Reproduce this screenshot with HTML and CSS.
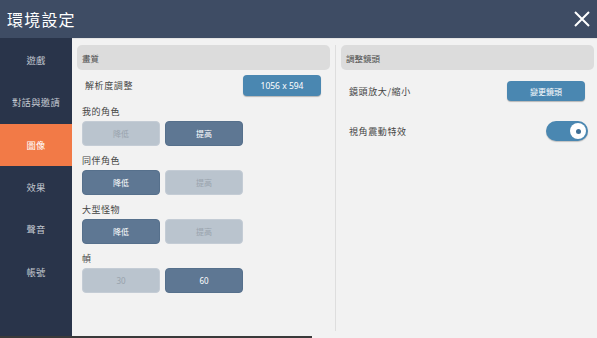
FILE: index.html
```html
<!DOCTYPE html>
<html>
<head>
<meta charset="utf-8">
<link rel="stylesheet" href="styles.css">
</head>
<body>
<div class="page">
  <header class="topbar">
    <div class="title">環境設定</div>
    <svg class="close" width="16" height="16" viewBox="0 0 16 16"><path d="M1 1 L15 15 M15 1 L1 15" stroke="#fff" stroke-width="2" fill="none"/></svg>
  </header>
  <div class="main">
    <nav class="sidebar">
      <div class="tab">遊戲</div>
      <div class="tab">對話與邀請</div>
      <div class="tab active">圖像</div>
      <div class="tab">效果</div>
      <div class="tab">聲音</div>
      <div class="tab">帳號</div>
    </nav>
    <section class="content">
      <div class="col">
        <div class="sec-head">畫質</div>
        <div class="row res-row">
          <span class="row-label">解析度調整</span>
          <span class="btn blue res-btn">1056 x 594</span>
        </div>
        <div class="group first">
          <div class="g-label">我的角色</div>
          <div class="pair"><span class="btn off">降低</span><span class="btn on">提高</span></div>
        </div>
        <div class="group">
          <div class="g-label">同伴角色</div>
          <div class="pair"><span class="btn on">降低</span><span class="btn off">提高</span></div>
        </div>
        <div class="group">
          <div class="g-label">大型怪物</div>
          <div class="pair"><span class="btn on">降低</span><span class="btn off">提高</span></div>
        </div>
        <div class="group">
          <div class="g-label">幀</div>
          <div class="pair"><span class="btn off num">30</span><span class="btn on num">60</span></div>
        </div>
      </div>
      <div class="divider"></div>
      <div class="col">
        <div class="sec-head">調整鏡頭</div>
        <div class="row cam-row">
          <span class="row-label">鏡頭放大/縮小</span>
          <span class="btn blue cam-btn">變更鏡頭</span>
        </div>
        <div class="row shake-row">
          <span class="row-label">視角震動特效</span>
          <span class="toggle"><span class="knob"></span></span>
        </div>
      </div>
    </section>
  </div>
  <div class="bottom-strip"></div>
</div>
</body>
</html>
```
FILE: styles.css
```css
* { box-sizing: border-box; }
html, body { margin: 0; padding: 0; }
body {
  width: 597px;
  height: 338px;
  overflow: hidden;
  background: #f2f2f2;
  font-family: "Noto Sans CJK TC", "Noto Sans", sans-serif;
}
.page { width: 597px; height: 338px; display: flex; flex-direction: column; }
.topbar {
  height: 38px;
  flex: none;
  background: #3e4c64;
  display: flex;
  align-items: center;
  justify-content: space-between;
  padding: 0 7px 0 7px;
}
.title {
  color: #fff;
  font-size: 16px;
  letter-spacing: 1.2px;
  line-height: 1;
}
.close { display: block; }
.main { flex: 1; display: flex; min-height: 0; }
.sidebar {
  width: 72px;
  flex: none;
  background: #29344a;
  padding-top: 1px;
}
.tab {
  height: 42.3px;
  display: flex;
  align-items: center;
  justify-content: center;
  color: #c4c9d1;
  font-size: 9.3px;
  letter-spacing: 0.3px;
}
.tab.active { background: #f27a47; color: #fff; }
.content {
  flex: 1;
  display: flex;
  padding: 6px 3px 0 5px;
  background: #f2f2f2;
  border-top: 1px solid #e4e4e4;
}
.col { width: 253px; flex: none; }
.divider {
  width: 1px;
  margin: 0 5px 5px 5px;
  background: #dedede;
}
.sec-head {
  height: 25px;
  border-radius: 5px;
  background: #dcdcdc;
  display: flex;
  align-items: center;
  padding-left: 5px;
  font-size: 8.5px;
  color: #4a4a4a;
}
.row { display: flex; align-items: center; padding-left: 8px; }
.row-label { flex: 1; font-size: 9px; letter-spacing: 0.6px; color: #444; }
.res-row { margin-top: 5px; height: 21px; padding-right: 9px; }
.cam-row { margin-top: 11px; height: 20px; padding-right: 9px; }
.shake-row { margin-top: 20px; height: 20px; padding-right: 6px; }
.btn {
  display: flex;
  align-items: center;
  justify-content: center;
  width: 78px;
  border-radius: 4px;
  font-size: 8px;
  color: #fff;
}
.blue {
  background: #4a87b1;
  box-shadow: 0 1px 1px rgba(0,0,0,0.25);
}
.res-btn { height: 21px; font-family: "Noto Sans", sans-serif; font-size: 8.5px; }
.cam-btn { height: 20px; font-size: 8px; }
.group { padding-left: 5px; margin-top: 7px; }
.group.first { margin-top: 8px; }
.g-label { height: 16px; line-height: 16px; font-size: 9px; letter-spacing: 0.5px; color: #444; margin-bottom: 1px; }
.pair { display: flex; gap: 5px; }
.pair .btn { height: 25px; }
.btn.on { background: #5e7793; color: #fff; border: 1px solid #56708c; }
.btn.off { background: #bac4ce; color: #99a3ad; border: 1px solid #c4ccd5; }
.btn.num { font-family: "Noto Sans", sans-serif; font-size: 8px; }
.toggle {
  width: 42px;
  height: 20px;
  border-radius: 10px;
  background: #4a87b1;
  display: flex;
  align-items: center;
  justify-content: flex-end;
  padding-right: 2px;
  box-shadow: 0 1px 1px rgba(0,0,0,0.2);
}
.knob {
  width: 16px;
  height: 16px;
  border-radius: 50%;
  background: #fff;
  display: flex;
  align-items: center;
  justify-content: center;
}
.knob::after {
  content: "";
  width: 5px;
  height: 5px;
  border-radius: 50%;
  background: #3f6f95;
}
.bottom-strip { height: 2px; width: 312px; background: #3a3a3a; flex: none; }
```
